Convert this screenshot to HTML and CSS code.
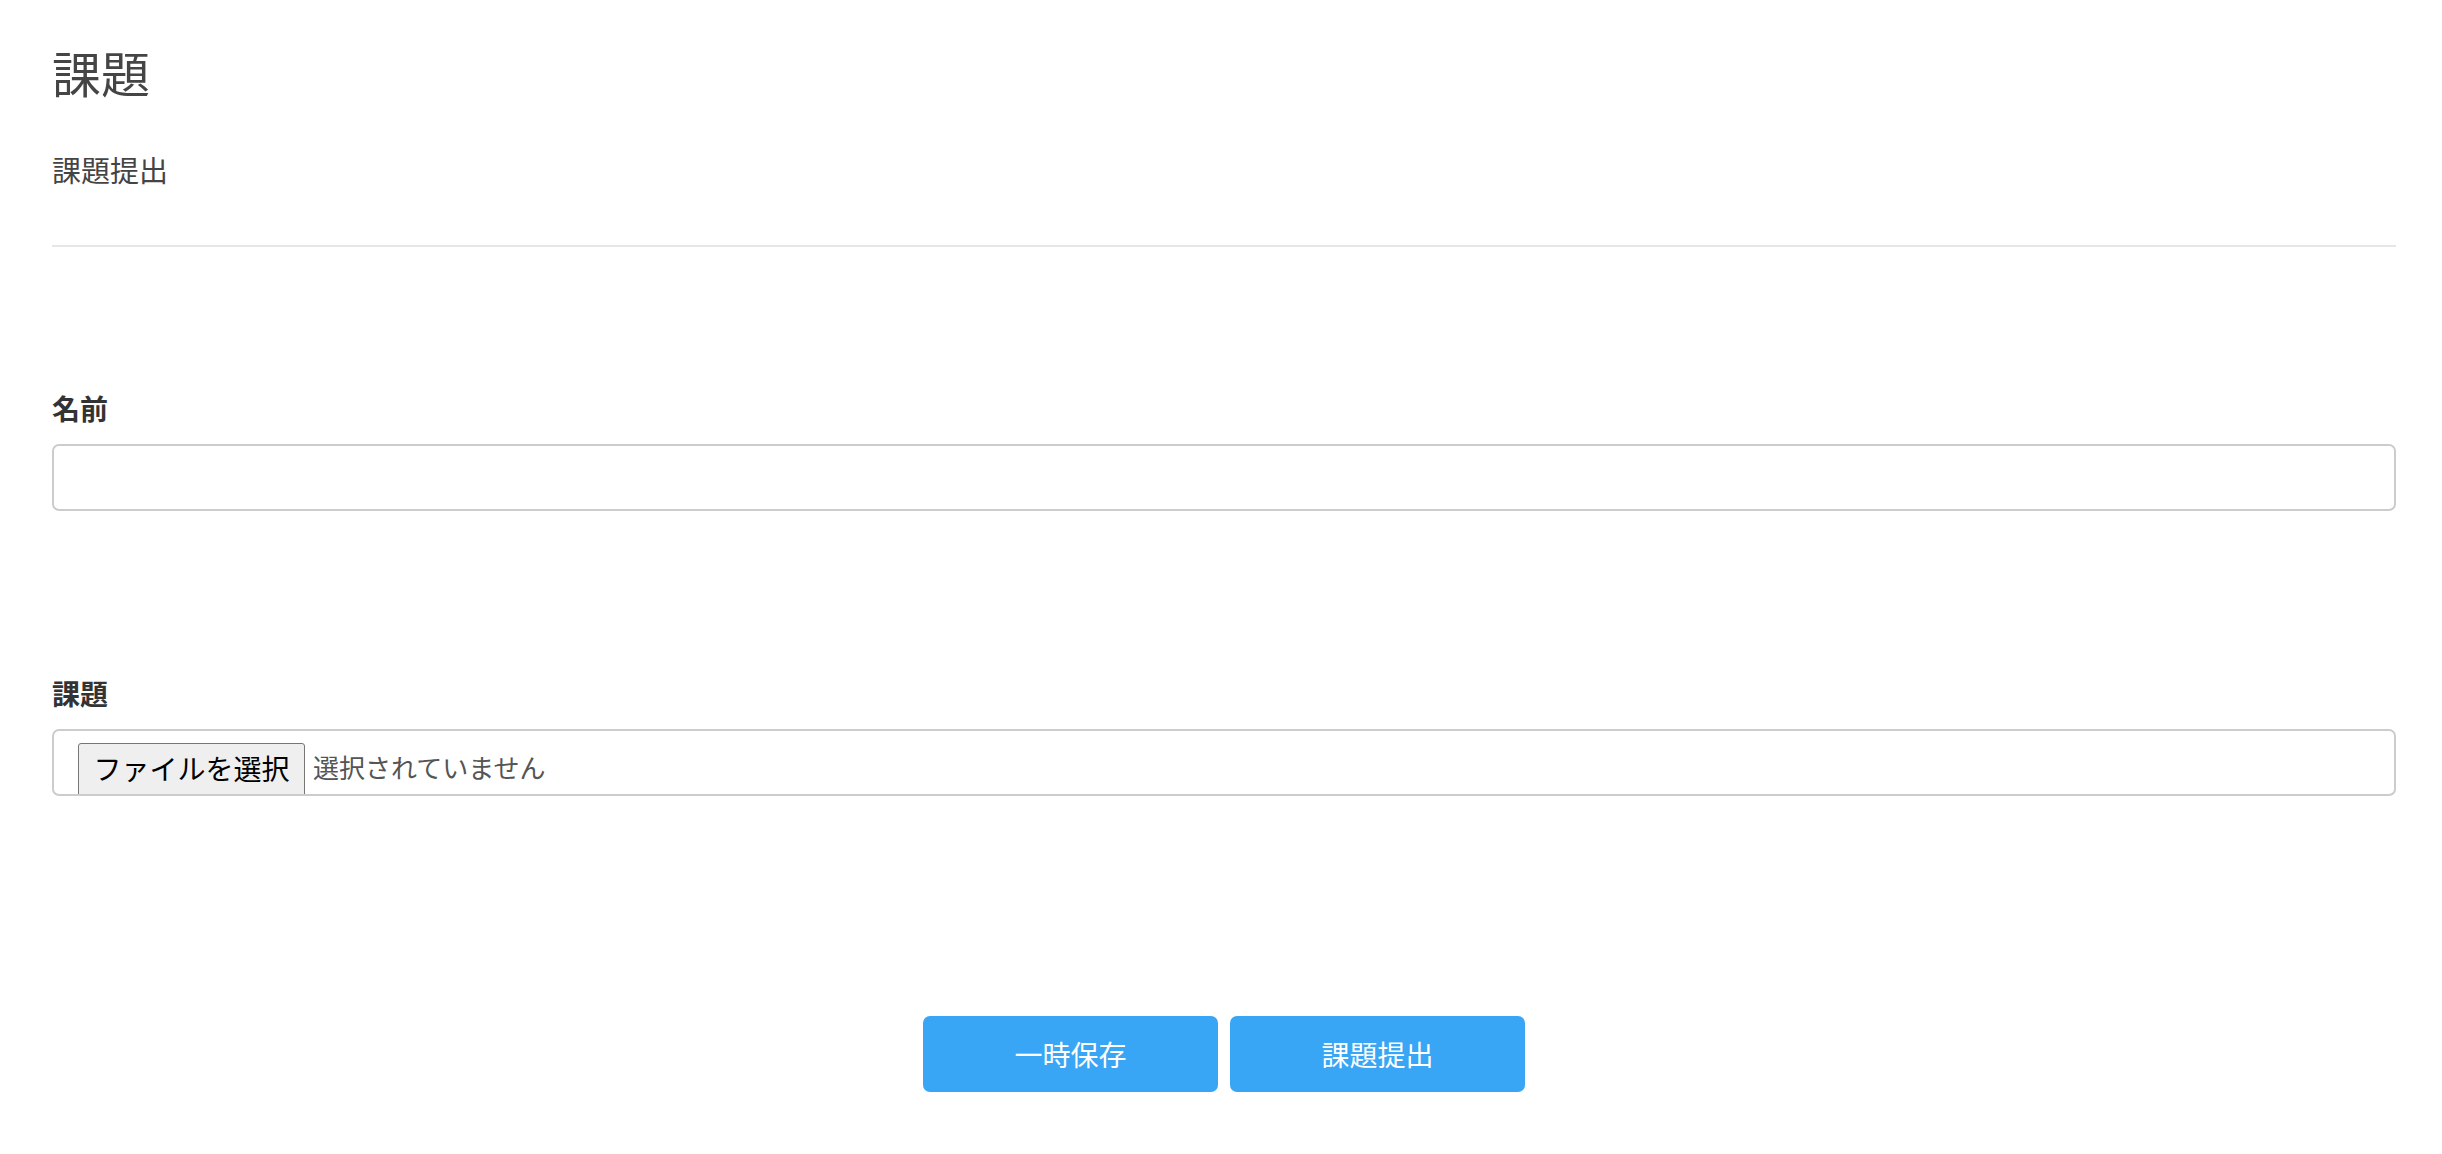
FILE: index.html
```html
<!DOCTYPE html>
<html lang="ja">
<head>
<meta charset="utf-8">
<title>課題</title>
<link rel="stylesheet" href="styles.css">
</head>
<body>
<main class="page">
  <header class="page-header">
    <h1 class="page-title">課題</h1>
    <p class="page-subtitle">課題提出</p>
  </header>
  <form class="form">
    <div class="field field-name">
      <label class="field-label" for="name">名前</label>
      <input class="text-input" id="name" type="text">
    </div>
    <div class="field field-file">
      <span class="field-label">課題</span>
      <div class="file-box">
        <button type="button" class="file-btn">ファイルを選択</button>
        <span class="file-status">選択されていません</span>
      </div>
    </div>
    <div class="actions">
      <button type="button" class="btn">一時保存</button>
      <button type="button" class="btn">課題提出</button>
    </div>
  </form>
</main>
</body>
</html>
```

FILE: styles.css
```css
* { box-sizing: border-box; }
html, body { margin: 0; padding: 0; background: #ffffff; }
body {
  font-family: "Noto Sans CJK JP", "Noto Sans", sans-serif;
  color: #444444;
}
.page {
  width: 2344px;
  margin-left: 52px;
  padding-top: 43px;
}
.page-header {
  border-bottom: 2px solid #e6e6e6;
  padding-bottom: 59px;
}
.page-title {
  margin: 0;
  font-size: 49px;
  line-height: 58px;
  font-weight: 400;
  color: #454545;
}
.page-subtitle {
  margin: 51px 0 0;
  font-size: 29px;
  line-height: 34px;
  color: #444444;
}
.form {
  display: flex;
  flex-direction: column;
}
.field {
  display: flex;
  flex-direction: column;
  gap: 19px;
}
.field-name { margin-top: 144px; }
.field-file { margin-top: 165px; }
.field-label {
  font-size: 28px;
  line-height: 34px;
  font-weight: 700;
  color: #333333;
}
.text-input {
  height: 67px;
  width: 100%;
  border: 2px solid #cccccc;
  border-radius: 7px;
  background: #fff;
  font: inherit;
  font-size: 28px;
  padding: 0 16px;
  outline: none;
}
.file-box {
  height: 67px;
  border: 2px solid #cccccc;
  border-radius: 7px;
  padding: 12px 24px 0;
  display: flex;
  align-items: flex-start;
  gap: 8px;
  overflow: hidden;
}
.file-btn {
  flex: none;
  width: 227px;
  height: 60px;
  margin: 0;
  padding: 0 0 10px;
  border: 1px solid #767676;
  border-radius: 3px;
  background: #efefef;
  color: #000;
  font-family: inherit;
  font-size: 28px;
  line-height: 38px;
}
.file-status {
  font-size: 26px;
  line-height: 48px;
  color: #555555;
}
.actions {
  margin-top: 220px;
  display: flex;
  justify-content: center;
  gap: 12px;
}
.btn {
  width: 295px;
  height: 76px;
  border: none;
  border-radius: 7px;
  background: #38a6f5;
  color: #ffffff;
  font-family: inherit;
  font-size: 28px;
  padding: 0;
}
```
